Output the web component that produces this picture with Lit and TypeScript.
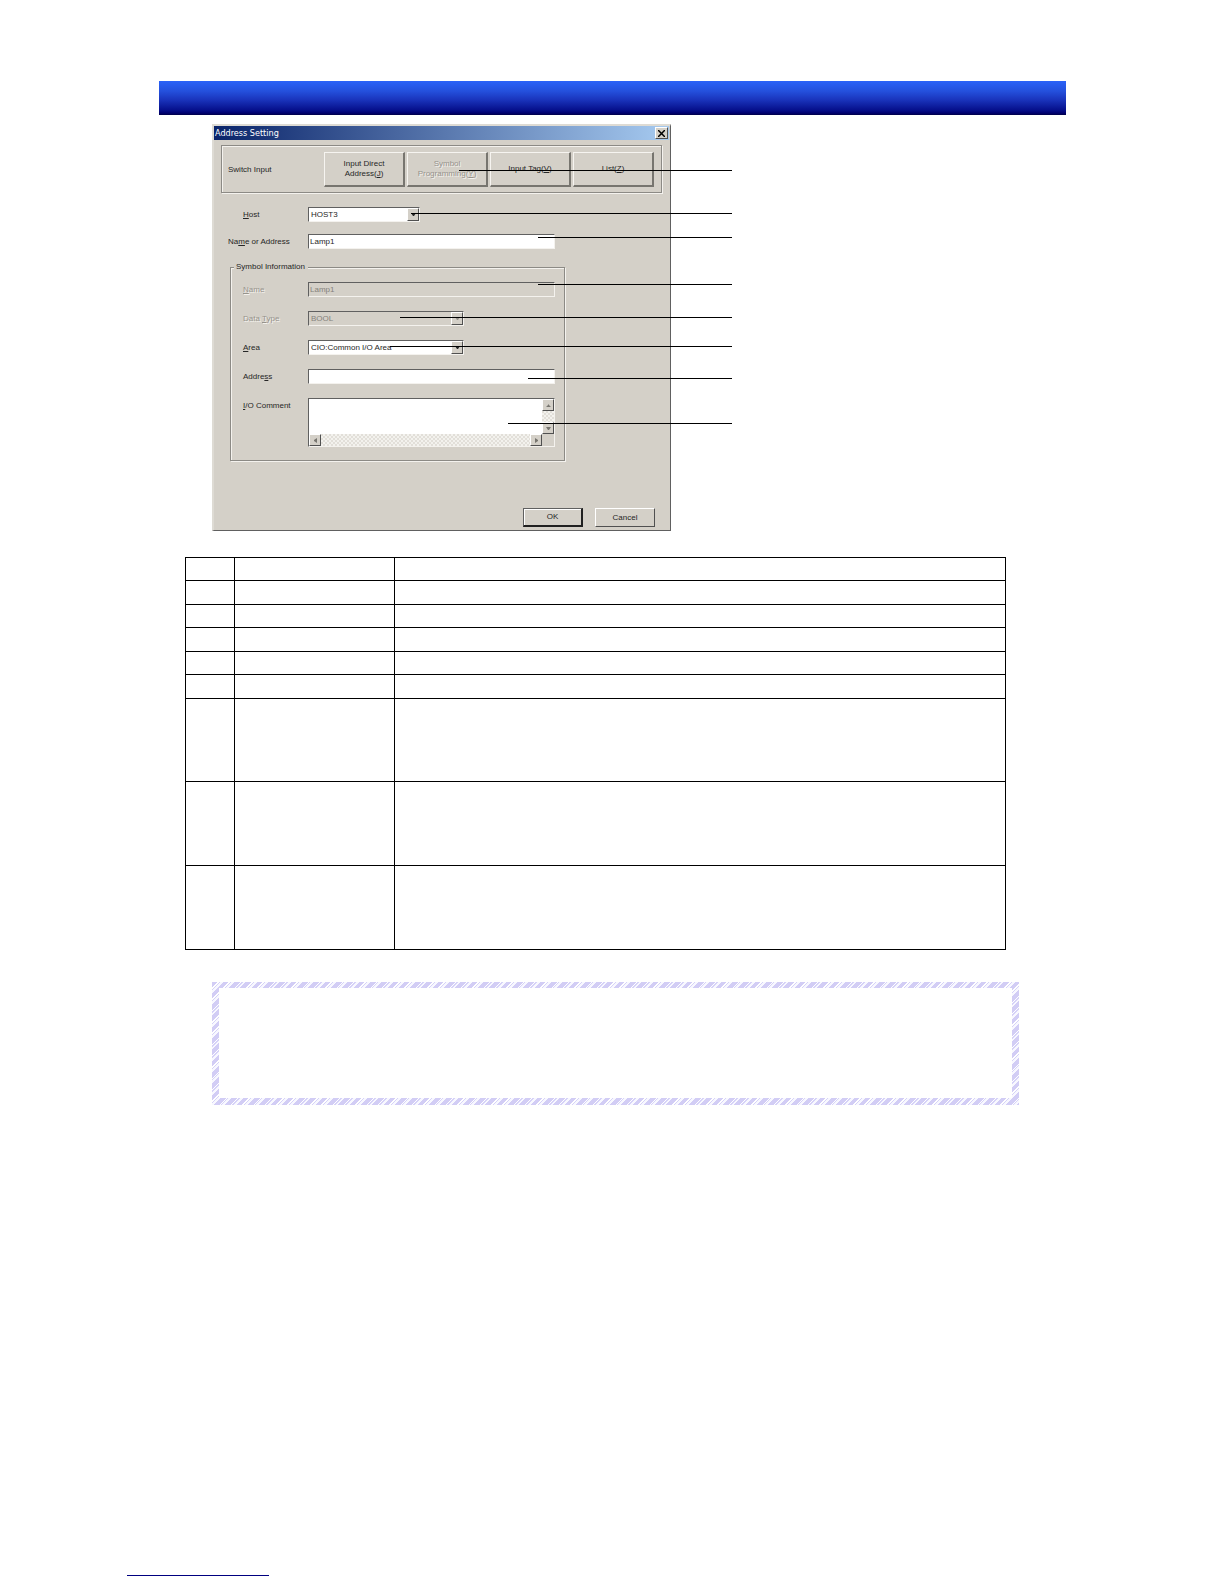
import { LitElement, html, svg, css } from "lit";
import { customElement } from "lit/decorators.js";

// Leader lines over the dialog: [start x, y], all ending at the same right edge.
const LEADERS: Array<[number, number]> = [
  [247, 46],
  [199, 89],
  [326, 113],
  [326, 160],
  [188, 193],
  [178, 222],
  [316, 254],
  [296, 299],
];
const LEADER_END = 520;

const TABLE_ROWS = ["short", "short", "short", "short", "short", "tall", "tall", "tall"];

const ARROWS: Record<string, string> = {
  up: "M1 5h5L3 2h1z",
  down: "M1 2h5L4 5h-1z",
  left: "M5 1v5L2 4v-1z",
  right: "M2 1v5L5 4v-1z",
};

const arrow = (dir: string) =>
  html`<svg class="arrow" viewBox="0 0 7 7" width="7" height="7" aria-hidden="true"><path d=${ARROWS[dir]} /></svg>`;

@customElement("address-dialog")
export class AddressDialog extends LitElement {
  static styles = css`
    :host {
      display: block;
      box-sizing: border-box;
      max-width: 459px;
      background: #d4d0c8;
      border: 2px solid #dedbd4;
      border-right: 1px solid #606060;
      border-bottom: 1px solid #606060;
      padding: 0 1px 3px 0;
      font: 8px/10px "Liberation Sans", Arial, sans-serif;
      color: #262626;
    }
    * {
      box-sizing: border-box;
    }
    button,
    input,
    select,
    textarea {
      font: inherit;
      color: inherit;
      margin: 0;
      border-radius: 0;
    }
    .titlebar {
      display: flex;
      align-items: center;
      justify-content: space-between;
      height: 14px;
      padding: 0 1px 0 1px;
      background: linear-gradient(90deg, #0a246a, #a6caf0);
    }
    .title {
      margin: 0;
      color: #fff;
      font: 9px/14px "DejaVu Sans Condensed", "DejaVu Sans", sans-serif;
      font-weight: 400;
    }
    .push {
      display: flex;
      align-items: center;
      justify-content: center;
      padding: 0;
      background: #d4d0c8;
      border: 1px solid;
      border-color: #fff #505050 #505050 #fff;
      text-align: center;
    }
    .close {
      width: 13px;
      height: 12px;
      color: #000;
    }
    .close svg {
      fill: none;
      stroke: currentColor;
      stroke-width: 1.5;
    }
    .frame {
      border: 1px solid #8c8a85;
      box-shadow: 1px 1px 0 #f4f2ee, inset 1px 1px 0 #f4f2ee;
    }
    .switcher {
      display: flex;
      align-items: center;
      justify-content: space-between;
      margin: 5px 7px 0;
      padding: 6px 7px 5px 6px;
    }
    .choices {
      display: flex;
      gap: 2px;
    }
    .choice {
      width: 81px;
      height: 35px;
      border-width: 1px 2px 2px 1px;
      border-color: #f6f4f0 #77756f #77756f #f6f4f0;
    }
    .faded {
      color: #96938c;
      text-shadow: 1px 1px 0 #f4f2ee;
    }
    .fields {
      display: grid;
      gap: 12px;
      margin: 14px 0 13px 14px;
    }
    .row {
      display: flex;
      align-items: flex-start;
    }
    .label {
      width: 65px;
      line-height: 15px;
      flex: none;
    }
    .wide {
      width: 80px;
    }
    .indent {
      padding-left: 15px;
    }
    .field {
      width: 247px;
      height: 15px;
      padding: 0 1px 1px;
      background: #fff;
      border: 1px solid;
      border-color: #606060 #f4f2ee #f4f2ee #606060;
      outline: none;
    }
    .field:disabled {
      background: #d4d0c8;
      color: #85827c;
      opacity: 1;
    }
    .combo {
      position: relative;
      display: flex;
      width: 156px;
    }
    .combo.narrow {
      width: 112px;
    }
    .combo .field {
      appearance: none;
      width: 100%;
      padding: 0 14px 0 2px;
      line-height: 12px;
    }
    .drop {
      position: absolute;
      right: 1px;
      top: 1px;
      width: 12px;
      height: 13px;
      pointer-events: none;
    }
    .arrow {
      fill: currentColor;
    }
    .info {
      min-width: 0;
      margin: 0 104px 0 16px;
      padding: 10px 7px 13px 12px;
    }
    .info legend {
      margin-left: -9px;
      padding: 0 3px 0 2px;
      background: #d4d0c8;
    }
    .stack {
      display: grid;
      gap: 14px;
    }
    .memo {
      display: grid;
      grid-template-columns: 1fr 12px;
      grid-template-rows: 1fr 12px;
      width: 247px;
      height: 49px;
      border: 1px solid;
      border-color: #606060 #f4f2ee #f4f2ee #606060;
    }
    .memo textarea {
      width: 100%;
      height: 100%;
      padding: 1px;
      border: 0;
      outline: none;
      resize: none;
      overflow: hidden;
      background: #fff;
    }
    .track {
      display: flex;
      justify-content: space-between;
      background: repeating-conic-gradient(#f3f2ee 0 25%, #e2dfd9 0 50%) 0 0 / 4px 4px;
    }
    .track.vertical {
      flex-direction: column;
    }
    .track .push {
      width: 12px;
      height: 12px;
      color: #77756f;
    }
    .actions {
      display: flex;
      justify-content: flex-end;
      gap: 12px;
      margin: 47px 14px 0 0;
    }
    .action {
      width: 60px;
      height: 19px;
    }
    .default {
      border-width: 1px 2px 2px 1px;
      border-color: #606060 #202020 #202020 #606060;
      box-shadow: inset 1px 1px 0 #fff;
    }
  `;

  render() {
    return html`
      <header class="titlebar">
        <h1 class="title">Address Setting</h1>
        <button class="push close" aria-label="Close">
          <svg viewBox="0 0 7 7" width="7" height="7"><path d="M0 0L7 7M7 0L0 7" /></svg>
        </button>
      </header>
      <div class="switcher frame">
        <span>Switch Input</span>
        <div class="choices">
          <button class="push choice"><span>Input Direct<br />Address(<u>J</u>)</span></button>
          <button class="push choice faded" disabled><span>Symbol<br />Programming(<u>Y</u>)</span></button>
          <button class="push choice"><span>Input Tag(<u>V</u>)</span></button>
          <button class="push choice"><span>List(<u>Z</u>)</span></button>
        </div>
      </div>
      <div class="fields">
        <div class="row">
          <label class="label wide indent" for="host"><u>H</u>ost</label>
          <span class="combo narrow">
            <select class="field" id="host"><option>HOST3</option></select>
            <span class="push drop">${arrow("down")}</span>
          </span>
        </div>
        <div class="row">
          <label class="label wide" for="target">Na<u>m</u>e or Address</label>
          <input class="field" id="target" value="Lamp1" />
        </div>
      </div>
      <fieldset class="info frame">
        <legend>Symbol Information</legend>
        <div class="stack">
          <div class="row">
            <label class="label faded" for="name"><u>N</u>ame</label>
            <input class="field" id="name" value="Lamp1" disabled />
          </div>
          <div class="row">
            <label class="label faded" for="type">Data <u>T</u>ype</label>
            <span class="combo">
              <select class="field" id="type" disabled><option>BOOL</option></select>
              <span class="push drop faded">${arrow("down")}</span>
            </span>
          </div>
          <div class="row">
            <label class="label" for="area"><u>A</u>rea</label>
            <span class="combo">
              <select class="field" id="area"><option>CIO:Common I/O Area</option></select>
              <span class="push drop">${arrow("down")}</span>
            </span>
          </div>
          <div class="row">
            <label class="label" for="address">Addre<u>s</u>s</label>
            <input class="field" id="address" />
          </div>
          <div class="row">
            <label class="label" for="comment"><u>I</u>/O Comment</label>
            <div class="memo">
              <textarea id="comment"></textarea>
              <div class="track vertical">
                <span class="push">${arrow("up")}</span>
                <span class="push">${arrow("down")}</span>
              </div>
              <div class="track">
                <span class="push">${arrow("left")}</span>
                <span class="push">${arrow("right")}</span>
              </div>
            </div>
          </div>
        </div>
      </fieldset>
      <div class="actions">
        <button class="push action default">OK</button>
        <button class="push action">Cancel</button>
      </div>
    `;
  }
}

@customElement("app-root")
export class AppRoot extends LitElement {
  static styles = css`
    :host {
      display: flex;
      flex-direction: column;
      box-sizing: border-box;
      min-height: 100vh;
      padding: 81px 158px 8px 159px;
      background: #fff;
    }
    .banner {
      height: 34px;
      background: linear-gradient(#2a62f8, #2450dc 30%, #1a34bc 55%, #06108c 85%, #000070 94%, #000048);
    }
    .figure {
      position: relative;
      margin: 9px 0 26px 53px;
    }
    .leaders {
      position: absolute;
      left: 0;
      top: 0;
      pointer-events: none;
      stroke: #000;
      shape-rendering: crispEdges;
    }
    .wrap {
      padding: 0 60px 0 26px;
    }
    .grid {
      width: 100%;
      table-layout: fixed;
      border-collapse: collapse;
    }
    .grid th,
    .grid td {
      padding: 0;
      border: 1px solid #000;
    }
    .grid tr {
      height: 23px;
    }
    .grid .short:nth-child(odd) {
      height: 24px;
    }
    .grid .tall {
      height: 84px;
    }
    .grid .short + .tall {
      height: 83px;
    }
    .number {
      width: 48px;
    }
    .item {
      width: 159px;
    }
    .note {
      display: flex;
      margin: 32px 47px 0 53px;
      padding: 6px 7px 7px;
      background: repeating-linear-gradient(
        135deg,
        #d2cdf5 0 4px,
        #ffffff 4px 5px,
        #d6d2f8 5px 6px,
        #f8f8ff 6px 8px
      );
    }
    .paper {
      flex: 1;
      min-height: 110px;
      background: #fff;
    }
    .rule {
      width: 142px;
      height: 1px;
      margin: auto 0 0 -32px;
      background: #000080;
    }
  `;

  render() {
    return html`
      <div class="banner"></div>
      <section class="figure">
        <address-dialog></address-dialog>
        <svg class="leaders" width="521" height="407" aria-hidden="true">
          ${LEADERS.map(([x, y]) => svg`<path d="M${x} ${y}.5H${LEADER_END}" />`)}
        </svg>
      </section>
      <div class="wrap">
        <table class="grid">
          <thead>
            <tr>
              <th class="number"></th>
              <th class="item"></th>
              <th></th>
            </tr>
          </thead>
          <tbody>
            ${TABLE_ROWS.map((size) => html`<tr class=${size}><td></td><td></td><td></td></tr>`)}
          </tbody>
        </table>
      </div>
      <aside class="note"><div class="paper"></div></aside>
      <footer class="rule"></footer>
    `;
  }
}
